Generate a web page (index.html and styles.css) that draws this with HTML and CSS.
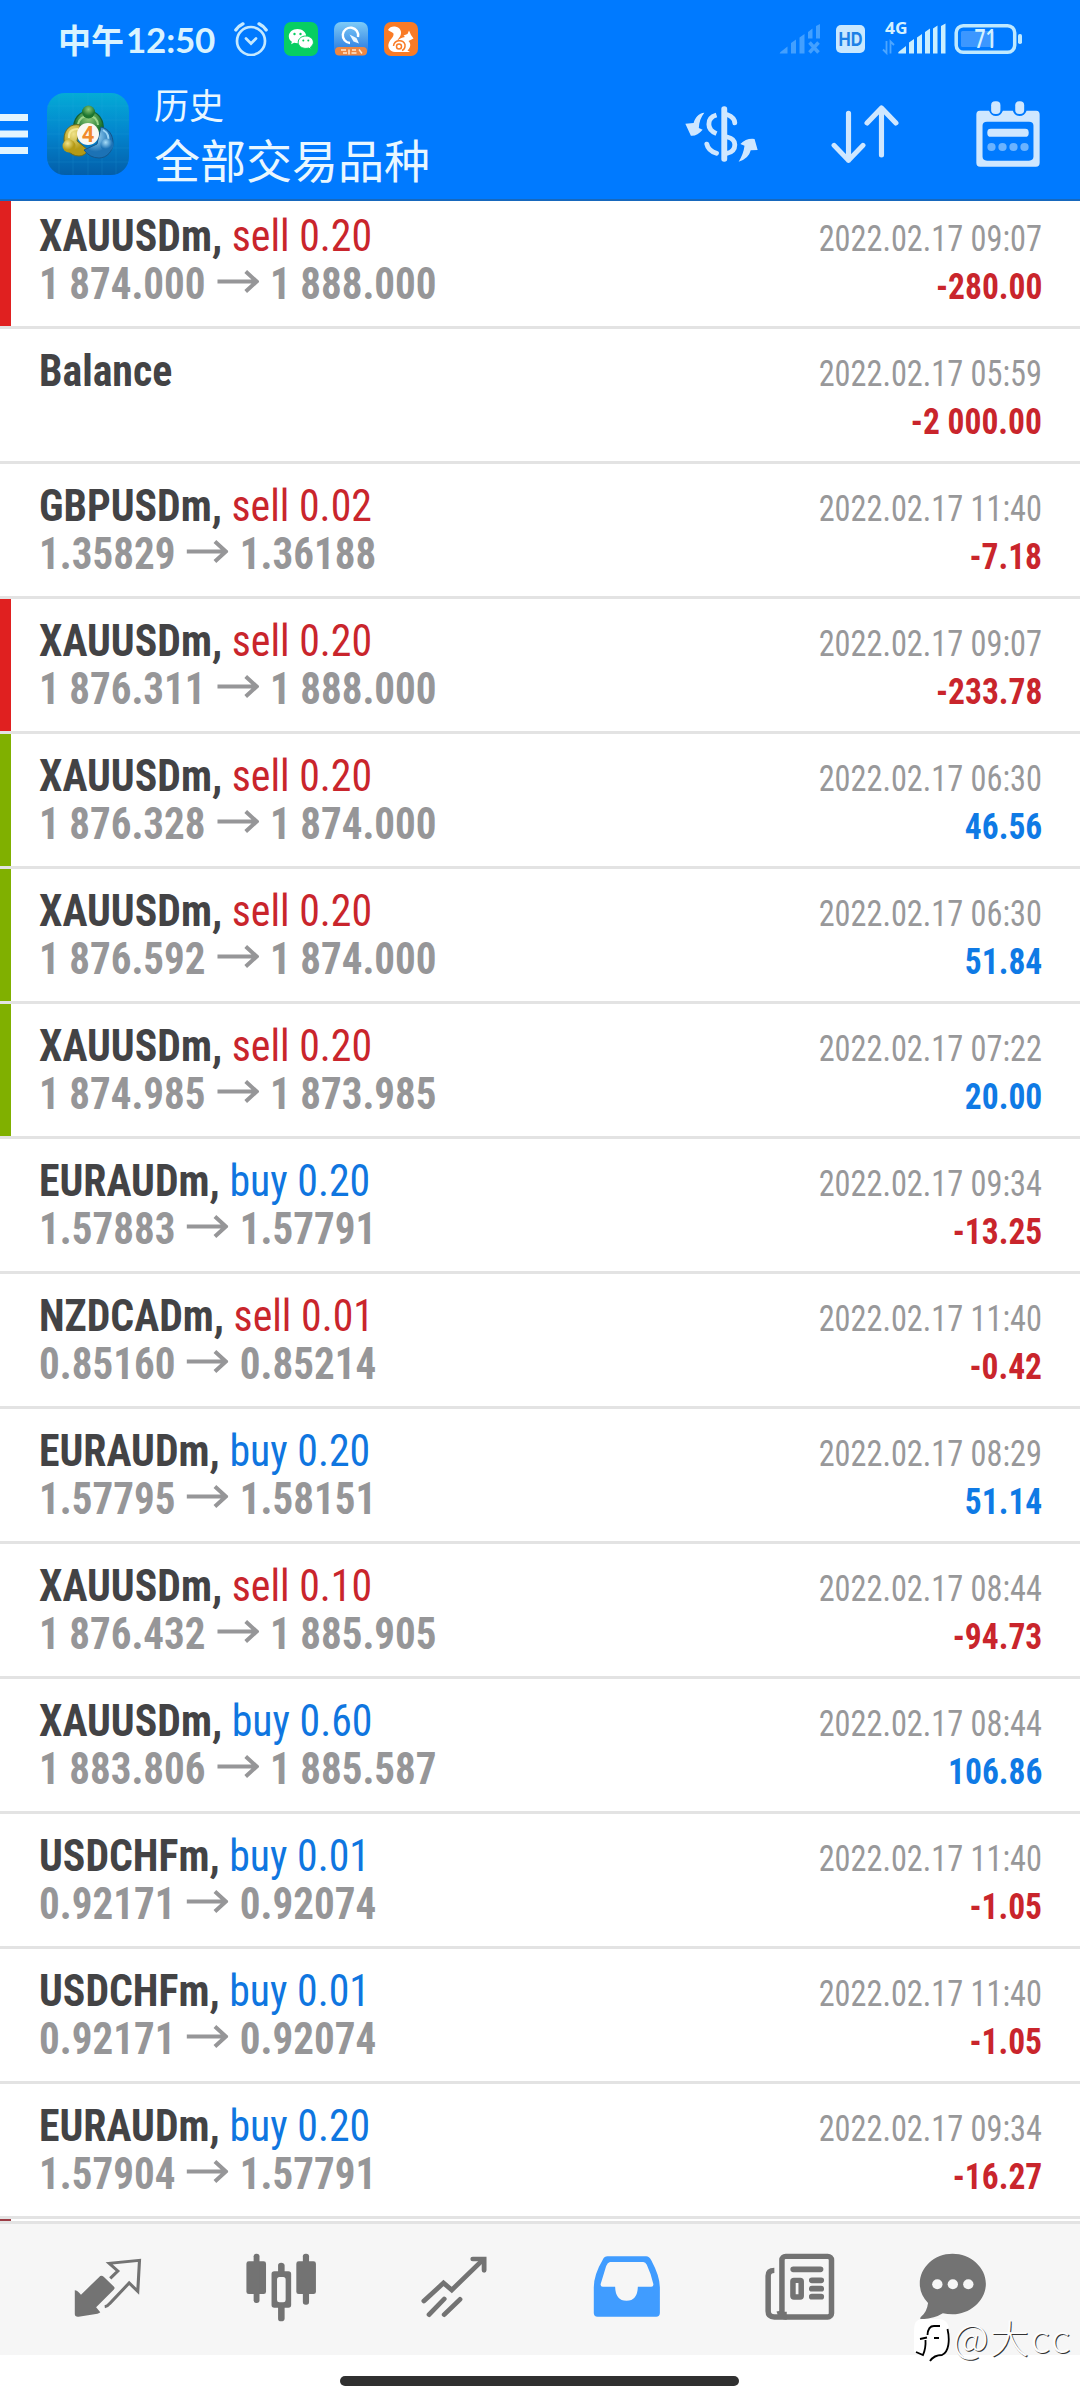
FILE: index.html
```html
<!DOCTYPE html>
<html lang="zh-CN">
<head>
<meta charset="utf-8">
<title>历史</title>
<link rel="stylesheet" href="styles.css">
</head>
<body>
<svg class="defs" aria-hidden="true">
  <symbol id="arrow" viewBox="0 0 42 23" preserveAspectRatio="none"><path d="M0 11.5H39M28.500 1.500L39.500 11.500L28.500 21.500" fill="none" stroke="currentColor" stroke-width="4"/></symbol>
</svg>
<div class="app">
  <header class="header">
    <div class="status">
      <div class="clock"><span class="cjk">中午</span><span class="digits">12:50</span></div>
      <svg class="alarm" viewBox="0 0 34 34"><g fill="none" stroke="#c4e9ff" stroke-width="2.700" stroke-linecap="round"><circle cx="17" cy="19" r="14"/><path d="M12 16.500L17 21.500L22 16.500"/><path d="M1.800 8Q4.500 4 9 1.800M32.200 8Q29.500 4 25 1.800" stroke-width="3.200"/></g></svg>
      <svg class="badge" viewBox="0 0 34 34"><rect width="34" height="34" rx="7" fill="#07ce62"/><path d="M13.500 7C8.500 7 4.800 10.200 4.800 14.200c0 2.300 1.200 4.200 3.100 5.500l-.8 2.600 3-1.500c1 .3 2.200.5 3.400.5 5 0 8.700-3.200 8.700-7.100S18.500 7 13.500 7z" fill="#fff"/><path d="M21.800 14c-4.200 0-7.600 2.700-7.600 6.200s3.400 6.200 7.600 6.200c1 0 1.900-.1 2.700-.4l2.700 1.300-.7-2.200c1.800-1.200 2.900-2.900 2.900-4.900 0-3.500-3.400-6.200-7.600-6.200z" fill="#fff" stroke="#07ce62"/><g fill="#07ce62"><circle cx="10.500" cy="12" r="1.200"/><circle cx="16.500" cy="12" r="1.200"/><circle cx="19.300" cy="18.600" r="1"/><circle cx="24.300" cy="18.600" r="1"/></g></svg>
      <svg class="badge" viewBox="0 0 34 34"><defs><linearGradient id="sky" x2="0" y2="1"><stop stop-color="#7dcbf8"/><stop offset="1" stop-color="#1f70dc"/></linearGradient></defs><rect width="34" height="34" rx="7" fill="url(#sky)"/><path d="M16 21A7.700 7.700 0 1 1 24 15" fill="none" stroke="#fff" stroke-width="2.400"/><path d="M15.500 12.500L22.500 16L25 21.500L19.500 19.500z" fill="#eaf7ff"/><rect x="1" y="25" width="32" height="8.500" rx="4" fill="#ed8742"/><path d="M7 28h5M9 31h4M15 27.500v5M18 28h4M17.500 31h5M25 27.500l3 4" stroke="#ffe9cf" stroke-width="1.500"/></svg>
      <svg class="badge" viewBox="0 0 34 34"><rect width="34" height="34" rx="7" fill="#f97b26"/><path d="M4 8C5.500 5 9 4 12 4.800c4.500 1.200 6 5 4.500 8.700-1 2.300-2.500 3.500-3.500 5.500 2.500-2.500 5-3.500 8-4l-1.500-1.500 4-1.500 1.500-3.500 2 4.500 2.500 3.500-5 2.500c2.500 2.500 2.500 6.500-1 9.500l2.500 1.500H11C5.500 29.500 3 25 5 20.500 6.500 17 10 15 9.500 11.500 8 10 6 9.500 4 8z" fill="#fff"/><g fill="none" stroke="#f97b26" stroke-width="1.500"><path d="M9.500 24A6 6 0 0 1 21 22.500Q21.500 27 18 28.500"/><circle cx="15" cy="24.500" r="2.500"/></g></svg>
      <svg class="radio" viewBox="0 0 246 34">
        <g fill="#43a0ff"><path d="M3 31.500Q2 31.500 3.500 30L10.500 24.500V31.500zM14 21l5-3.500v14h-5zM22.500 15.500l5-3.500v19.500h-5zM31 10l4.500-3.500v10h-4.500zM39 4l4-2v14.500h-4z"/><path d="M32.500 20.500l9 10M41.500 20.500l-9 10" stroke="#43a0ff" stroke-width="3.500"/></g>
        <rect x="59" y="3" width="29" height="28" rx="5" fill="#c9e8ff"/><text class="hd" x="73.500" y="23.500" text-anchor="middle" textLength="24" lengthAdjust="spacingAndGlyphs">HD</text>
        <text class="net" x="108" y="12" textLength="22.500" lengthAdjust="spacingAndGlyphs">4G</text>
        <path d="M109.500 19v12l-3.500-3.500M113.500 31.500v-12l3.500 3.500" fill="none" stroke="#4da6ff" stroke-width="1.800"/>
        <path d="M121.500 31.500Q120.500 31 122 29.500L129 24v7.500zM132 20.500l5-3.500v14.500h-5zM140 15.500l5-3.500v19.500h-5zM148 10l5-3.500v25h-5zM156 6.500l4.500-3v28H156zM164 4l4.500-2.500v30H164z" fill="#c9eeff"/>
        <rect x="179.200" y="3.700" width="58.500" height="26.500" rx="7" fill="none" stroke="#bfe9ff" stroke-width="3.500"/><rect x="184" y="9" width="33" height="16" rx="1.500" fill="#3c97ff"/><rect x="241" y="12" width="4" height="10" rx="1.800" fill="#bfe9ff"/>
        <text class="pct" x="208.500" y="25.500" text-anchor="middle" textLength="22" lengthAdjust="spacingAndGlyphs">71</text>
      </svg>
    </div>
    <div class="toolbar">
      <svg class="menu" viewBox="0 0 28 40"><path d="M0 3.500H28M0 20H28M0 36.500H28" stroke="#e2f5ff" stroke-width="7"/></svg>
      <svg class="logo" viewBox="0 0 82 82">
        <defs>
          <linearGradient id="tile" x2="0" y2="1"><stop stop-color="#04abd6"/><stop offset=".5" stop-color="#0384cd"/><stop offset="1" stop-color="#035ea9"/></linearGradient>
          <radialGradient id="gr" cx=".5" cy=".3"><stop stop-color="#8bc878"/><stop offset="1" stop-color="#1d7630"/></radialGradient>
          <radialGradient id="ye" cx=".4" cy=".3"><stop stop-color="#f0e38a"/><stop offset="1" stop-color="#b49a16"/></radialGradient>
          <radialGradient id="bl" cx=".4" cy=".3"><stop stop-color="#a6dcf8"/><stop offset="1" stop-color="#1c72b5"/></radialGradient>
        </defs>
        <rect width="82" height="82" rx="18" fill="url(#tile)"/>
        <path d="M12 1V81M26 0V82M41 0V82M55 0V82M69 1V81M0 13H82M0 27H82M0 41H82M0 55H82M0 69H82" stroke="#35b1e3" stroke-width=".8" opacity=".2"/>
        <path d="M27 38C25 26 33 18 41.500 18S58 26 56 39l-6 6L33 42z" fill="url(#gr)" stroke="#155f32" stroke-width="1.200"/>
        <path d="M31 31Q33 23 41.500 23T51 32" fill="none" stroke="#9bd58b" stroke-width="2"/>
        <path d="M33 32C23 30 17 37 17 46s6 17 15 17q6 0 9-6L30 48z" fill="url(#ye)" stroke="#6d6c20"/>
        <path d="M22 45Q21 36 31 36" fill="none" stroke="#f3e995" stroke-width="2"/>
        <path d="M54 34C62 36 66 42 66 50s-6 15-14 15q-9 0-15-8l13-6z" fill="url(#bl)" stroke="#14568c"/>
        <path d="M56 37Q63 41 61 49" fill="none" stroke="#9cd5f5" stroke-width="2"/>
        <circle cx="41.500" cy="19" r="6.500" fill="url(#gr)"/><circle cx="22" cy="53" r="6.500" fill="url(#ye)"/><circle cx="60" cy="52" r="6.500" fill="url(#bl)"/>
        <circle cx="41" cy="41" r="11" fill="#fbf8f2"/>
        <text class="four" x="41" y="48.500" text-anchor="middle">4</text>
      </svg>
      <div class="titles"><div class="small">历史</div><div class="big">全部交易品种</div></div>
      <svg class="tool-dollar" viewBox="423 316 211 168" preserveAspectRatio="none">
        <g fill="#cfe7ff"><path d="M479 336C463 337 452 350 448 367L424 369L440 405Q458 407 474 387L463 382Q464 355 479 336zM578 483Q592 460 595 435L583 430Q600 412 624 415L633 448L613 449Q607 475 578 483z"/><rect x="528" y="317" width="17" height="166" rx="8"/></g>
        <g fill="none" stroke="#cfe7ff" stroke-width="14"><path d="M514 343Q491 350 492 371Q492 390 514 399"/><path d="M545 342Q566 350 567 367M486 430Q490 450 514 458M545 409Q567 414 567 432Q567 452 545 458" stroke-linecap="round"/></g>
      </svg>
      <svg class="tool-sort" viewBox="845 316 198 177" preserveAspectRatio="none"><path d="M896 341V482M854 437L896 482L938 437M992 466V325M950 370L992 325L1034 370" fill="none" stroke="#cfe7ff" stroke-width="15" stroke-linecap="round" stroke-linejoin="round"/></svg>
      <svg class="tool-cal" viewBox="1266 304 186 197" preserveAspectRatio="none"><path fill-rule="evenodd" fill="#cfe7ff" d="M1277 333H1304Q1310 349 1324 349T1344 333H1373Q1379 349 1393 349T1413 333H1441Q1451 333 1451 345V488Q1451 500 1440 500H1278Q1267 500 1267 488V345Q1267 333 1277 333zM1298 366Q1285 366 1285 378V470Q1285 482 1298 482H1420Q1433 482 1433 470V378Q1433 366 1420 366z"/><g fill="#cfe7ff"><rect x="1310" y="305" width="27" height="38" rx="12"/><rect x="1380" y="305" width="26" height="38" rx="12"/><rect x="1299" y="387" width="120" height="24" rx="10"/></g><g fill="#6bb3ff"><circle cx="1311" cy="441" r="12"/><circle cx="1343" cy="441" r="12"/><circle cx="1375" cy="441" r="12"/><circle cx="1407" cy="441" r="12"/></g></svg>
    </div>
  </header>

  <main class="list">
    <article class="row first loss"><div class="line"><div class="name"><b>XAUUSDm,</b> <span class="sell">sell 0.20</span></div><time>2022.02.17 09:07</time></div><div class="line"><div class="price">1 874.000<svg><use href="#arrow"/></svg>1 888.000</div><div class="amount neg">-280.00</div></div></article>
    <article class="row"><div class="line"><div class="name"><b>Balance</b></div><time>2022.02.17 05:59</time></div><div class="line"><div class="price">&nbsp;</div><div class="amount neg">-2 000.00</div></div></article>
    <article class="row"><div class="line"><div class="name"><b>GBPUSDm,</b> <span class="sell">sell 0.02</span></div><time>2022.02.17 11:40</time></div><div class="line"><div class="price">1.35829<svg><use href="#arrow"/></svg>1.36188</div><div class="amount neg">-7.18</div></div></article>
    <article class="row loss"><div class="line"><div class="name"><b>XAUUSDm,</b> <span class="sell">sell 0.20</span></div><time>2022.02.17 09:07</time></div><div class="line"><div class="price">1 876.311<svg><use href="#arrow"/></svg>1 888.000</div><div class="amount neg">-233.78</div></div></article>
    <article class="row gain"><div class="line"><div class="name"><b>XAUUSDm,</b> <span class="sell">sell 0.20</span></div><time>2022.02.17 06:30</time></div><div class="line"><div class="price">1 876.328<svg><use href="#arrow"/></svg>1 874.000</div><div class="amount">46.56</div></div></article>
    <article class="row gain"><div class="line"><div class="name"><b>XAUUSDm,</b> <span class="sell">sell 0.20</span></div><time>2022.02.17 06:30</time></div><div class="line"><div class="price">1 876.592<svg><use href="#arrow"/></svg>1 874.000</div><div class="amount">51.84</div></div></article>
    <article class="row gain"><div class="line"><div class="name"><b>XAUUSDm,</b> <span class="sell">sell 0.20</span></div><time>2022.02.17 07:22</time></div><div class="line"><div class="price">1 874.985<svg><use href="#arrow"/></svg>1 873.985</div><div class="amount">20.00</div></div></article>
    <article class="row"><div class="line"><div class="name"><b>EURAUDm,</b> <span class="buy">buy 0.20</span></div><time>2022.02.17 09:34</time></div><div class="line"><div class="price">1.57883<svg><use href="#arrow"/></svg>1.57791</div><div class="amount neg">-13.25</div></div></article>
    <article class="row"><div class="line"><div class="name"><b>NZDCADm,</b> <span class="sell">sell 0.01</span></div><time>2022.02.17 11:40</time></div><div class="line"><div class="price">0.85160<svg><use href="#arrow"/></svg>0.85214</div><div class="amount neg">-0.42</div></div></article>
    <article class="row"><div class="line"><div class="name"><b>EURAUDm,</b> <span class="buy">buy 0.20</span></div><time>2022.02.17 08:29</time></div><div class="line"><div class="price">1.57795<svg><use href="#arrow"/></svg>1.58151</div><div class="amount">51.14</div></div></article>
    <article class="row"><div class="line"><div class="name"><b>XAUUSDm,</b> <span class="sell">sell 0.10</span></div><time>2022.02.17 08:44</time></div><div class="line"><div class="price">1 876.432<svg><use href="#arrow"/></svg>1 885.905</div><div class="amount neg">-94.73</div></div></article>
    <article class="row"><div class="line"><div class="name"><b>XAUUSDm,</b> <span class="buy">buy 0.60</span></div><time>2022.02.17 08:44</time></div><div class="line"><div class="price">1 883.806<svg><use href="#arrow"/></svg>1 885.587</div><div class="amount">106.86</div></div></article>
    <article class="row"><div class="line"><div class="name"><b>USDCHFm,</b> <span class="buy">buy 0.01</span></div><time>2022.02.17 11:40</time></div><div class="line"><div class="price">0.92171<svg><use href="#arrow"/></svg>0.92074</div><div class="amount neg">-1.05</div></div></article>
    <article class="row"><div class="line"><div class="name"><b>USDCHFm,</b> <span class="buy">buy 0.01</span></div><time>2022.02.17 11:40</time></div><div class="line"><div class="price">0.92171<svg><use href="#arrow"/></svg>0.92074</div><div class="amount neg">-1.05</div></div></article>
    <article class="row"><div class="line"><div class="name"><b>EURAUDm,</b> <span class="buy">buy 0.20</span></div><time>2022.02.17 09:34</time></div><div class="line"><div class="price">1.57904<svg><use href="#arrow"/></svg>1.57791</div><div class="amount neg">-16.27</div></div></article>
    <div class="peek"></div>
  </main>

  <nav class="tabs">
    <svg viewBox="208 160 215 210" preserveAspectRatio="none"><path d="M219 272Q226 272 237 285L293 229Q298 226 303 231L333 261Q337 266 332 270L281 323L293 338Q291 341 285 342L230 351Q219 352 219 343z"/><path d="M322 236L344 214L319 191L407 182L402 275L377 250L320 312Q314 320 306 321" class="ln" stroke-width="9"/></svg>
    <svg viewBox="708 160 215 210" preserveAspectRatio="none"><rect x="715" y="185" width="57" height="98" rx="7"/><rect x="736" y="162" width="17" height="148" rx="8"/><rect x="860" y="185" width="57" height="98" rx="7"/><rect x="879" y="162" width="18" height="153" rx="8"/><path fill-rule="evenodd" d="M796 215H837Q845 215 845 223V316Q845 324 837 324H796Q788 324 788 316V223Q788 215 796 215zM811 232Q804 232 804 240V301Q804 308 811 308H822Q829 308 829 301V240Q829 232 822 232z"/><path d="M807 217V197Q807 189 816 189T826 197V217zM807 322V357Q807 365 816 365T826 357V322z"/></svg>
    <svg viewBox="1211 160 215 210" preserveAspectRatio="none"><path d="M1231 304L1288 250L1312 271L1403 180M1246 345L1290 298M1290 345L1336 299" class="ln" stroke-width="14" stroke-linecap="round"/><path d="M1373 178H1406V212" class="ln" stroke-width="14" stroke-linecap="round"/></svg>
    <svg viewBox="147 160 215 210" preserveAspectRatio="none"><path fill="#409cff" fill-rule="evenodd" d="M198 170H310Q319 170 325 182Q350 230 350 263V340Q350 351 339 351H169Q158 351 158 340V263Q158 225 184 180Q189 170 198 170zM205 187Q198 189 194 199L178 253Q177 261 184 261H220Q221 303 253 303T286 261H325Q332 261 331 253Q325 223 312 195Q308 187 302 187z"/></svg>
    <svg viewBox="651 160 215 210" preserveAspectRatio="none"><rect x="706" y="170" width="144" height="182" rx="11" class="ln" stroke-width="16"/><path d="M684 212Q666 212 666 228V335Q666 352 684 352H712V344Q700 344 698 334" class="ln" stroke-width="16"/><path d="M739 209H818M793 242H820M793 267H820M793 291H820" class="ln" stroke-width="17" stroke-linecap="round"/><rect x="738" y="242" width="24" height="50" rx="3" class="ln" stroke-width="16"/></svg>
    <svg viewBox="1092 160 215 210" preserveAspectRatio="none"><path d="M1198 162C1250 162 1295 202 1295 252S1250 344 1198 344Q1183 344 1170 341Q1147 356 1110 359Q1101 360 1106 352Q1124 337 1127 310Q1103 284 1103 252C1103 202 1146 162 1198 162z"/><g fill="#f6f6f6"><circle cx="1154" cy="254" r="15"/><circle cx="1199" cy="254" r="15"/><circle cx="1244" cy="254" r="15"/></g></svg>
  </nav>
  <div class="gesture"><i></i></div>
  <div class="mark">
    <svg viewBox="0 0 38 46"><path d="M10 1H26Q37 1 37 13V27Q37 36 28 38L24 39L18 44L19 38H10L2 34V12Q2 1 10 1z" fill="#fff"/><path d="M35.500 11C38 22 37 34 30 37Q22 37 18 43" fill="none" stroke="#000" stroke-width="1.800"/><path d="M28 8H22Q16 8 15.500 17M8 21L15 19.500M13.500 22Q14 30 11 37L4 34M22 20H27" fill="none" stroke="#000" stroke-width="1.800"/></svg>
    <span>@大cc</span>
  </div>
</div>
</body>
</html>
```
FILE: styles.css
```css
* { box-sizing: border-box; }
body { margin: 0; background: #fff; }
.defs { display: none; }
.app {
  position: relative;
  display: flex;
  flex-direction: column;
  width: 1080px;
  height: 2400px;
  overflow: hidden;
  background: #fff;
  font-family: "Roboto Condensed", Roboto, "Noto Sans CJK SC", sans-serif;
  font-stretch: 75%;
}
.header { height: 201px; background: #007aff; border-bottom: 2px solid #1768bd; }

.status { display: flex; align-items: center; height: 78px; padding-left: 58px; }
.clock { display: flex; align-items: center; width: 176px; color: #d9f3ff; line-height: 40px; white-space: nowrap; }
.clock .cjk { font: 700 33px/40px "Noto Sans CJK SC", sans-serif; }
.clock .digits { margin-left: 2px; font: 700 35px/40px Lato, sans-serif; letter-spacing: -.2px; }
.alarm { width: 34px; height: 34px; margin-right: 16px; }
.badge { width: 34px; height: 34px; margin-right: 16px; }
.radio { width: 246px; height: 34px; margin-left: 343px; overflow: visible; }
.hd { font: 700 19px Inter, sans-serif; fill: #1d80e6; }
.net { font: 700 16px "Open Sans", sans-serif; fill: #d5f1ff; }
.pct { font: 600 27px "Open Sans", sans-serif; fill: #d5f3ff; }

.toolbar { display: flex; align-items: center; height: 121px; padding-bottom: 9px; }
.menu { width: 28px; height: 40px; margin-right: 19px; }
.logo { width: 82px; height: 82px; margin-right: 25px; }
.four { font: 700 22px Roboto, sans-serif; fill: #f18a2c; }
.titles { width: 531px; color: #e9f7ff; font-family: "Noto Sans CJK SC", sans-serif; font-weight: 400; white-space: nowrap; }
.small { font-size: 35px; line-height: 47px; }
.big { font-size: 46px; line-height: 62px; }
.tool-dollar { width: 73px; height: 56px; margin-right: 73px; }
.tool-sort { width: 68px; height: 59px; margin-right: 77px; }
.tool-cal { width: 64px; height: 66px; }

.list { height: 2020px; overflow: hidden; }
.row { height: 135px; padding: 18px 38px 0 39px; border-bottom: 3px solid #e3e3e3; background: #fff; }
.row.first { height: 128px; padding-top: 11px; }
.row.loss { background: linear-gradient(#e02020, #e02020) 0 0 / 11px 100% no-repeat; }
.row.gain { background: linear-gradient(#80b000, #80b000) 0 0 / 11px 100% no-repeat; }
.line { display: flex; align-items: baseline; justify-content: space-between; height: 48px; line-height: 48px; white-space: nowrap; }
.name, .price { font-size: 44px; transform-origin: left; }
.name { color: #434345; transform: scaleX(.95); }
.name b { font-weight: 700; }
.sell { color: #c9252c; }
.buy { color: #0f76e0; }
.price { color: #969698; font-weight: 700; transform: scaleX(.933); }
.price svg { width: 45px; height: 23px; margin: 0 12px; vertical-align: 6px; }
time, .amount { font-size: 36px; transform-origin: right; }
time { color: #98989a; transform: scaleX(.897); }
.amount { color: #0f7ae5; font-weight: 700; transform: scaleX(.93); }
.amount.neg { color: #c9252c; }
.peek { width: 11px; height: 2px; background: #9c3d45; }

.tabs { display: flex; height: 134px; padding: 29px 0 0 71px; gap: 99px; background: #f6f6f6; border-top: 3px solid #e3e3e3; }
.tabs svg { flex: none; width: 74px; height: 70px; fill: #737373; }
.tabs svg:last-child { margin-left: -20px; }
.tabs .ln { fill: none; stroke: #737373; }
.gesture { display: flex; justify-content: center; padding: 21px 2px 0 0; }
.gesture i { width: 399px; height: 10px; border-radius: 5px; background: #303030; }

.mark { position: absolute; left: 912px; top: 2318px; display: flex; align-items: flex-start; }
.mark svg { width: 38px; height: 46px; margin-right: 3px; }
.mark span { color: #fdfdfd; font: 300 39px/36px "Noto Sans CJK SC", sans-serif; letter-spacing: 1.5px; text-shadow: 1px 1px 0 #333; }
```
